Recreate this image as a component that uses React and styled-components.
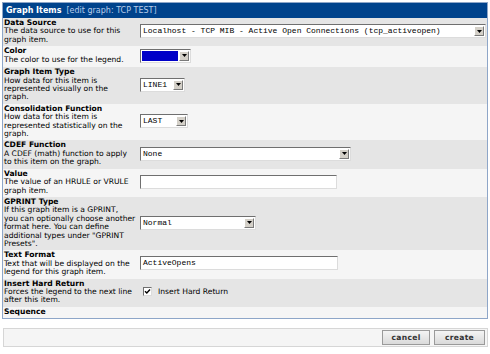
import React from "react";
import styled, { createGlobalStyle } from "styled-components";

const GlobalStyle = createGlobalStyle`
    body {
        margin: 0;
        background: #ffffff;
        font-family: "DejaVu Sans", Verdana, sans-serif;
    }
`;

const Page = styled.div`
    width: 486px;
    padding: 2px 0 0 2px;
`;

const Panel = styled.div`
    border: 1px solid #8ea6c8;
`;

const Header = styled.div`
    height: 15px;
    background: #00438c;
    display: flex;
    align-items: center;
    padding-left: 3px;
    font-size: 8px;
    color: #ffffff;
`;

const HeaderTitle = styled.span`
    font-weight: bold;
`;

const HeaderSub = styled.span`
    margin-left: 5px;
    color: #b9cdea;
`;

const Row = styled.div`
    display: grid;
    grid-template-columns: 136px 1fr;
    min-height: ${(p) => p.$min || 0}px;
    background: ${(p) => (p.$alt ? "#e5e5e5" : "#f5f5f5")};
`;

const LabelCell = styled.div`
    padding: 1px 0 2px 1px;
    font-size: 7.6px;
    line-height: 8.4px;
    color: #000;
    white-space: nowrap;
`;

const Label = styled.div`
    font-weight: bold;
`;

const FieldCell = styled.div`
    display: flex;
    align-items: center;
    padding: 0 0 2px 1px;
`;

const Combo = styled.div`
    display: flex;
    box-sizing: border-box;
    width: ${(p) => p.$w}px;
    height: 14px;
    border: 1px solid;
    border-color: #6f6f6f #dcdcdc #dcdcdc #6f6f6f;
    background: #ffffff;
`;

const ComboText = styled.div`
    flex: 1;
    padding-left: 2px;
    font-family: "Liberation Mono", "Courier New", monospace;
    font-size: 8px;
    line-height: 12px;
    white-space: nowrap;
    overflow: hidden;
    color: #000;
`;

const Swatch = styled.div`
    flex: 1;
    margin: 1px;
    background: #0000c8;
`;

const ComboArrow = styled.div`
    width: 10px;
    box-sizing: border-box;
    margin: 1px 1px 1px 0;
    background: #d4d0c8;
    border: 1px solid;
    border-color: #ffffff #7a7a7a #7a7a7a #ffffff;
    display: flex;
    align-items: center;
    justify-content: center;
`;

const TextBox = styled.div`
    box-sizing: border-box;
    width: ${(p) => p.$w}px;
    height: 14px;
    border: 1px solid;
    border-color: #6f6f6f #dcdcdc #dcdcdc #6f6f6f;
    background: #ffffff;
    padding-left: 2px;
    font-family: "Liberation Mono", "Courier New", monospace;
    font-size: 8px;
    line-height: 12px;
    color: #000;
`;

const CheckWrap = styled.label`
    display: flex;
    align-items: center;
    gap: 6px;
    margin-left: 3px;
    font-size: 7.6px;
    color: #000;
`;

const CheckBox = styled.div`
    width: 9px;
    height: 9px;
    box-sizing: border-box;
    border: 1px solid;
    border-color: #6f6f6f #dcdcdc #dcdcdc #6f6f6f;
    background: #fff;
    display: flex;
    align-items: center;
    justify-content: center;
`;

const ButtonBar = styled.div`
    margin-top: 9px;
    margin-left: 1px;
    height: 19px;
    box-sizing: border-box;
    border: 1px solid #d6d6d6;
    background: #f5f5f5;
    display: flex;
    justify-content: flex-end;
    align-items: center;
    gap: 4px;
    padding-right: 2px;
`;

const Button = styled.button`
    width: ${(p) => p.$w}px;
    height: 15px;
    padding: 0;
    border: 1px solid #9a9a9a;
    background: linear-gradient(#f4f4f4, #dadada);
    font-family: "DejaVu Sans", Verdana, sans-serif;
    font-size: 7.6px;
    font-weight: bold;
    letter-spacing: 0.3px;
    color: #333;
`;

const Arrow = () => (
    <svg width="5" height="3" viewBox="0 0 5 3">
        <path d="M0 0h5L2.5 3z" fill="#000" />
    </svg>
);

const Select = ({ w, value, color }) => (
    <Combo $w={w}>
        {color ? <Swatch /> : <ComboText>{value}</ComboText>}
        <ComboArrow>
            <Arrow />
        </ComboArrow>
    </Combo>
);

const rows = [
    {
        label: "Data Source",
        desc: ["The data source to use for this", "graph item."],
        field: <Select w={346} value="Localhost - TCP MIB - Active Open Connections (tcp_activeopen)" />,
    },
    {
        label: "Color",
        desc: ["The color to use for the legend."],
        min: 21,
        field: <Select w={51} color />,
    },
    {
        label: "Graph Item Type",
        desc: ["How data for this item is", "represented visually on the", "graph."],
        field: <Select w={45} value="LINE1" />,
    },
    {
        label: "Consolidation Function",
        desc: ["How data for this item is", "represented statistically on the", "graph."],
        field: <Select w={48} value="LAST" />,
    },
    {
        label: "CDEF Function",
        desc: ["A CDEF (math) function to apply", "to this item on the graph."],
        field: <Select w={211} value="None" />,
    },
    {
        label: "Value",
        desc: ["The value of an HRULE or VRULE", "graph item."],
        field: <TextBox $w={197} />,
    },
    {
        label: "GPRINT Type",
        desc: [
            "If this graph item is a GPRINT,",
            "you can optionally choose another",
            "format here. You can define",
            'additional types under "GPRINT',
            'Presets".',
        ],
        field: <Select w={116} value="Normal" />,
    },
    {
        label: "Text Format",
        desc: ["Text that will be displayed on the", "legend for this graph item."],
        field: <TextBox $w={198}>ActiveOpens</TextBox>,
    },
    {
        label: "Insert Hard Return",
        desc: ["Forces the legend to the next line", "after this item."],
        field: (
            <CheckWrap>
                <CheckBox>
                    <svg width="7" height="7" viewBox="0 0 7 7">
                        <path d="M1 3.2l1.8 1.8L6 1.5" stroke="#000" strokeWidth="1.4" fill="none" />
                    </svg>
                </CheckBox>
                Insert Hard Return
            </CheckWrap>
        ),
    },
    {
        label: "Sequence",
        desc: [],
        field: null,
    },
];

const App = () => {
    return (
        <Page>
            <GlobalStyle />
            <Panel>
                <Header>
                    <HeaderTitle>Graph Items</HeaderTitle>
                    <HeaderSub>[edit graph: TCP TEST]</HeaderSub>
                </Header>
                {rows.map((r, i) => (
                    <Row key={r.label} $alt={i % 2 === 0} $min={r.min}>
                        <LabelCell>
                            <Label>{r.label}</Label>
                            {r.desc.map((line) => (
                                <div key={line}>{line}</div>
                            ))}
                        </LabelCell>
                        <FieldCell>{r.field}</FieldCell>
                    </Row>
                ))}
            </Panel>
            <ButtonBar>
                <Button $w={48}>cancel</Button>
                <Button $w={51}>create</Button>
            </ButtonBar>
        </Page>
    );
};

export default App;
